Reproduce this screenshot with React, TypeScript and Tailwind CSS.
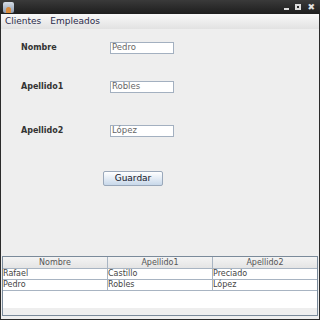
import React from "react";

const rows = [
  ["Rafael", "Castillo", "Preciado"],
  ["Pedro", "Robles", "López"],
];

const Field = ({ label, value, gap }: { label: string; value: string; gap: string }) => (
  <div className={`flex items-center h-[13px] ${gap}`}>
    <span className="w-[109px] pl-[20px] text-[8px] font-bold text-[#333333]">{label}</span>
    <div className="w-[64px] h-[12px] bg-white border border-[#a3b0c0] flex items-center pl-[1px] text-[8.5px] text-[#666666]">
      {value}
    </div>
  </div>
);

const App: React.FC = () => {
  return (
    <div
      className="w-[320px] h-[320px] flex flex-col bg-[#2b2b2b] overflow-hidden"
      style={{ fontFamily: '"DejaVu Sans", sans-serif' }}
    >
      {/* title bar */}
      <div className="h-[14px] flex items-center justify-between bg-gradient-to-b from-[#3a3a3a] to-[#1e1e1e] px-[3px]">
        <div className="w-[11px] h-[11px] rounded-[2px] bg-gradient-to-b from-[#d6dde6] to-[#8c9bb0] flex items-end justify-center">
          <div className="w-[5px] h-[6px] rounded-t-full bg-[#d98a3a]" />
        </div>
        <div className="flex items-center gap-[6px] pr-[2px] text-[#e0e0e0]">
          <div className="w-[5px] h-[2px] bg-[#dddddd] mt-[3px]" />
          <div className="w-[6px] h-[6px] border-[2px] border-[#dddddd]" />
          <span className="text-[9px] font-bold leading-none">✖</span>
        </div>
      </div>

      <div className="flex-1 flex flex-col mx-[1px] mb-[1px] bg-[#eeeeee]">
        {/* menu bar */}
        <div className="h-[15px] flex items-center gap-[9px] px-[4px] bg-gradient-to-b from-[#f8f8f8] to-[#e2e2e2] text-[9px] text-[#2a2a4a]">
          <span>Clientes</span>
          <span>Empleados</span>
        </div>

        {/* form */}
        <div className="flex flex-col pt-[12px]">
          <Field label="Nombre" value="Pedro" gap="" />
          <Field label="Apellido1" value="Robles" gap="mt-[26px]" />
          <Field label="Apellido2" value="López" gap="mt-[31px]" />
          <div className="pl-[102px] mt-[34px]">
            <button className="w-[60px] h-[15px] flex items-center justify-center border border-[#9aa8ba] rounded-[2px] bg-gradient-to-b from-[#ffffff] to-[#c8d8ea] text-[9px] text-[#141428]">
              Guardar
            </button>
          </div>
        </div>

        {/* table */}
        <div className="mt-[70px] mx-[1px] h-[60px] flex flex-col border border-[#7a8a9a] bg-white">
          <div className="grid grid-cols-[105px_105px_1fr] h-[12px] bg-gradient-to-b from-[#f4f4f4] to-[#e4e4e4] border-b border-[#a8b4c2] text-[8px] text-[#555555] leading-[11px]">
            <div className="text-center border-r border-[#a8b4c2]">Nombre</div>
            <div className="text-center border-r border-[#a8b4c2]">Apellido1</div>
            <div className="text-center">Apellido2</div>
          </div>
          {rows.map((r, i) => (
            <div key={i} className="grid grid-cols-[105px_105px_1fr] h-[11px] border-b border-[#a8b4c2] text-[8px] text-[#444444] leading-[10px]">
              {r.map((c, j) => (
                <div key={j} className={j < 2 ? "border-r border-[#a8b4c2]" : ""}>{c}</div>
              ))}
            </div>
          ))}
          <div className="flex-1" />
          <div className="h-[7px] bg-[#eeeeee]" />
        </div>
        <div className="flex-1" />
      </div>
    </div>
  );
};

export default App;
